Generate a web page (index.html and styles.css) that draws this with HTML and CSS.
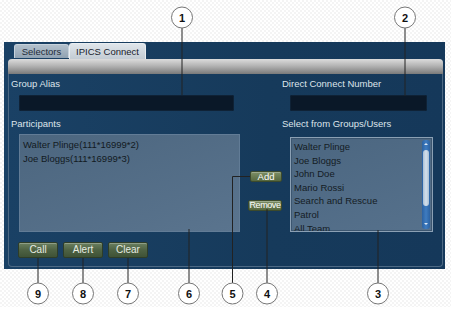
FILE: index.html
```html
<!DOCTYPE html>
<html>
<head>
<meta charset="utf-8">
<title>IPICS Connect</title>
<link rel="stylesheet" href="styles.css">
</head>
<body>
<div class="page">
  <div class="window">
    <div class="tabs">
      <span class="tab">Selectors</span>
      <span class="tab active">IPICS Connect</span>
    </div>
    <div class="frame">
      <div class="bar"></div>
      <div class="form">
        <div class="lbl c1">Group Alias</div>
        <div class="lbl c3">Direct Connect Number</div>
        <div class="field alias c1"></div>
        <div class="field direct c3"></div>
        <div class="lbl c1 gap">Participants</div>
        <div class="lbl c3 gap">Select from Groups/Users</div>
        <ul class="participants c1">
          <li>Walter Plinge(111*16999*2)</li>
          <li>Joe Bloggs(111*16999*3)</li>
        </ul>
        <div class="mover c2">
          <button class="btn small add">Add</button>
          <button class="btn small remove">Remove</button>
        </div>
        <div class="picker c3">
          <ul>
            <li>Walter Plinge</li>
            <li>Joe Bloggs</li>
            <li>John Doe</li>
            <li>Mario Rossi</li>
            <li>Search and Rescue</li>
            <li>Patrol</li>
            <li>All Team</li>
          </ul>
          <div class="scroll">
            <span class="arrow up"></span>
            <span class="thumb"></span>
            <span class="arrow down"></span>
          </div>
        </div>
      </div>
      <div class="actions">
        <button class="btn">Call</button>
        <button class="btn">Alert</button>
        <button class="btn">Clear</button>
      </div>
    </div>
  </div>

  <!-- callout annotations -->
  <svg class="callouts" width="451" height="331" viewBox="0 0 451 331">
    <g class="leader">
      <line x1="182" y1="28" x2="182" y2="95"/>
      <line x1="405" y1="28" x2="405" y2="96"/>
      <line x1="378" y1="230" x2="378" y2="283"/>
      <line x1="267" y1="209" x2="267" y2="283"/>
      <polyline points="250,176.5 232.5,176.5 232.5,283"/>
      <line x1="189" y1="229" x2="189" y2="283"/>
      <line x1="128" y1="258" x2="128" y2="283"/>
      <line x1="83" y1="258" x2="83" y2="283"/>
      <line x1="38" y1="258" x2="38" y2="283"/>
    </g>
    <g class="bubble">
      <circle cx="182" cy="17.5" r="10.5"/><text x="182" y="21.5">1</text>
      <circle cx="405" cy="17.5" r="10.5"/><text x="405" y="21.5">2</text>
      <circle cx="378" cy="293.5" r="10.5"/><text x="378" y="297.5">3</text>
      <circle cx="267" cy="293.5" r="10.5"/><text x="267" y="297.5">4</text>
      <circle cx="232.5" cy="293.5" r="10.5"/><text x="232.5" y="297.5">5</text>
      <circle cx="189" cy="293.5" r="10.5"/><text x="189" y="297.5">6</text>
      <circle cx="128" cy="293.5" r="10.5"/><text x="128" y="297.5">7</text>
      <circle cx="83" cy="293.5" r="10.5"/><text x="83" y="297.5">8</text>
      <circle cx="38" cy="293.5" r="10.5"/><text x="38" y="297.5">9</text>
    </g>
  </svg>
</div>
</body>
</html>
```

FILE: styles.css
```css
body {
	margin: 0;
	background: #fff;
	font-family: "Liberation Sans", Arial, sans-serif;
}
.page {
	position: relative;
	width: 451px;
	height: 331px;
	overflow: hidden;
	padding-top: 42px;
	box-sizing: border-box;
	background:
		linear-gradient(#fff, #fff) 0 307px / 100% 100% no-repeat,
		repeating-conic-gradient(#f4f4f4 0 25%, #fff 0 50%) 0 0 / 4px 4px;
}

/* window */
.window {
	margin-left: 4px;
	width: 441px;
	height: 227px;
	background: linear-gradient(90deg, #1a4165, #163a5b 60%, #15385a);
	display: flex;
	flex-direction: column;
}
.tabs {
	height: 17px;
	padding-left: 10px;
	display: flex;
	align-items: flex-end;
}
.tab {
	box-sizing: border-box;
	height: 14px;
	width: 55px;
	margin-bottom: 1px;
	font-size: 9.5px;
	line-height: 13px;
	text-align: center;
	color: #1f2c38;
	background: linear-gradient(#b2c0cc, #90a2b2);
	border: 1px solid #c6d2dc;
	border-bottom: none;
	border-radius: 3px 3px 0 0;
}
.tab.active {
	width: 77px;
	height: 16px;
	margin-bottom: 0;
	line-height: 15px;
	color: #18212a;
	background: linear-gradient(#dfe5ea, #c3ccd4);
	border-color: #e8edf1;
}

.frame {
	box-sizing: border-box;
	margin-left: 4px;
	width: 435px;
	height: 208px;
	border: 1px solid #4d6984;
	border-top: none;
	border-radius: 4px 4px 4px 4px;
}
.bar {
	height: 15px;
	margin: 0 -1px;
	border-radius: 4px 4px 0 0;
	background: linear-gradient(#dcdcdc, #b4b4b4 45%, #7a7a7a);
}

/* form grid */
.form {
	display: grid;
	grid-template-columns: 238px 33px 1fr;
	padding: 4px 0 0 2px;
}
.c1 { grid-column: 1; }
.c2 { grid-column: 2; }
.c3 { grid-column: 3; }
.lbl {
	font-size: 9.5px;
	line-height: 12px;
	height: 12px;
	color: #dde4ea;
	white-space: nowrap;
}
.lbl.gap { margin-top: 7px; }
.field {
	margin: 5px 0 0 8px;
	height: 16px;
	background: #0a1828;
	border-radius: 2px;
	box-shadow: inset 0 0 0 1px #0f2236;
}
.field.alias { width: 215px; }
.field.direct { width: 137px; }

ul {
	margin: 0;
	padding: 0;
	list-style: none;
}
.participants {
	box-sizing: border-box;
	margin: 4px 0 0 8px;
	width: 221px;
	height: 98px;
	padding: 3px 3px;
	background: linear-gradient(160deg, #4c667f, #5a748e);
	border: 1px solid #627c96;
	font-size: 9.5px;
	line-height: 14px;
	color: #121a22;
}

.mover {
	display: flex;
	flex-direction: column;
	align-items: flex-end;
}
.btn {
	box-sizing: border-box;
	padding: 0;
	font-family: "Liberation Sans", Arial, sans-serif;
	font-size: 9.5px;
	color: #e6ece2;
	background: linear-gradient(#6b8060, #4e6243 50%, #3f5236);
	border: 1px solid #2e3d28;
	border-radius: 2px;
	box-shadow: inset 0 1px 0 rgba(255, 255, 255, 0.25);
	overflow: hidden;
	white-space: nowrap;
}
.btn.small {
	height: 11px;
	line-height: 9px;
	font-size: 9.5px;
	color: #fff;
	background: linear-gradient(#7d8f66, #56683f);
	border-color: #3c4a2c;
}
.btn.add {
	width: 32px;
	margin-top: 41px;
}
.btn.remove {
	width: 34px;
	margin-top: 18px;
	font-size: 9px;
	letter-spacing: -0.4px;
}

.picker {
	box-sizing: border-box;
	margin: 7px 0 0 8px;
	width: 143px;
	height: 95px;
	display: flex;
	background: linear-gradient(160deg, #4b6680, #56718c);
	border: 1px solid #8ba0b4;
	box-shadow: inset 0 0 0 1px #3c5670;
	overflow: hidden;
}
.picker ul {
	flex: 1;
	padding: 2px 0 0 3px;
	font-size: 9.5px;
	line-height: 13.6px;
	color: #141c24;
}
.scroll {
	width: 8px;
	margin: 2px 2px 2px 0;
	border-radius: 3px;
	background: linear-gradient(90deg, #2b62a3, #3f7cc0, #2b62a3);
	display: flex;
	flex-direction: column;
	align-items: center;
}
.arrow {
	width: 0;
	height: 0;
	border-left: 2px solid transparent;
	border-right: 2px solid transparent;
}
.arrow.up {
	margin-top: 3px;
	border-bottom: 2px solid #dde8f4;
}
.arrow.down {
	margin-top: auto;
	margin-bottom: 4px;
	border-top: 2px solid #dde8f4;
}
.thumb {
	width: 6px;
	height: 56px;
	margin-top: 5px;
	border-radius: 3px;
	background: linear-gradient(90deg, #a9bfd4, #d4e0ec, #a9bfd4);
}

.actions {
	display: flex;
	gap: 5px;
	padding: 10px 0 0 9px;
}
.actions .btn {
	width: 40px;
	height: 16px;
	line-height: 14px;
	font-size: 10px;
}

/* callouts */
.callouts {
	position: absolute;
	left: 0;
	top: 0;
	pointer-events: none;
}
.leader line,
.leader polyline {
	stroke: #222;
	stroke-width: 1;
	fill: none;
}
.bubble circle {
	fill: #fff;
	stroke: #777;
	stroke-width: 1;
}
.bubble text {
	font-family: "Liberation Sans", Arial, sans-serif;
	font-size: 11px;
	font-weight: bold;
	text-anchor: middle;
	fill: #111;
}
```
